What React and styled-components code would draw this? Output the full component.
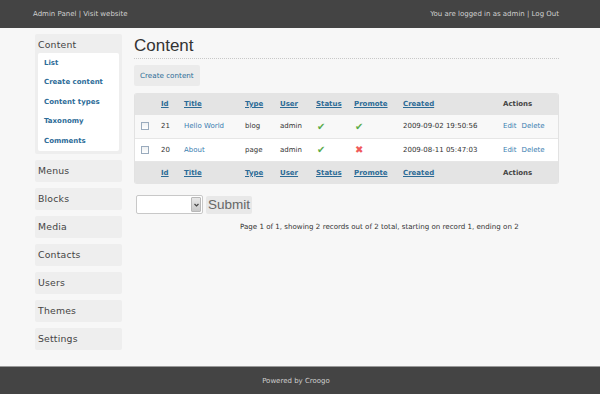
import React from 'react'
import styled, { createGlobalStyle } from 'styled-components'

const GlobalStyle = createGlobalStyle`
    html, body {
        margin: 0;
        padding: 0;
        background: #f7f7f7;
        font-family: "DejaVu Sans", Verdana, sans-serif;
    }
`

const Page = styled.div`
    display: flex;
    flex-direction: column;
    height: 394px;
`

const Header = styled.div`
    height: 28px;
    background: #444444;
    color: #d0d0d0;
    font-size: 7px;
`

const Wrap = styled.div`
    margin-left: 33px;
    width: 526px;
`

const HeaderInner = styled(Wrap)`
    height: 100%;
    display: flex;
    align-items: center;
    justify-content: space-between;
`

const Body = styled(Wrap)`
    flex: 1;
    display: flex;
    gap: 12px;
    padding-top: 6px;
`

const Sidebar = styled.div`
    width: 87px;
    flex-shrink: 0;
    margin-left: 2px;
    display: flex;
    flex-direction: column;
    gap: 6px;
`

const Block = styled.div`
    background: #eeeeee;
    border-radius: 2px;
    padding: 0 3px 3px;
    margin-bottom: ${props => props.extra || "0"};
`

const BlockTitle = styled.div`
    height: 19px;
    line-height: 21px;
    font-size: 9.3px;
    color: #444;
    letter-spacing: 0.2px;
`

const SubList = styled.ul`
    margin: 0;
    padding: 1px 0 0 6px;
    list-style: none;
    background: #fff;
    border-radius: 2px;
`

const SubItem = styled.li`
    line-height: 19.4px;
    font-size: 7px;
    font-weight: bold;
    color: #2d6c98;
`

const Main = styled.div`
    flex: 1;
    min-width: 0;
`

const Title = styled.h1`
    margin: 0;
    font-family: "Liberation Sans", Arial, sans-serif;
    font-weight: normal;
    font-size: 17px;
    line-height: 22px;
    color: #333;
    padding-top: 1px;
    padding-bottom: 1px;
    border-bottom: 1px dotted #c8c8c8;
`

const ActionBar = styled.div`
    padding-top: 6px;
    display: flex;
`

const ActionButton = styled.div`
    background: #ebebeb;
    border-radius: 2px;
    height: 21px;
    line-height: 21px;
    padding: 0 6px;
    font-size: 7.2px;
    color: #2c6b96;
`

const TableWrap = styled.div`
    margin-top: 7px;
    border-radius: 3px;
    overflow: hidden;
    border: 1px solid #e2e2e2;
    border-top: 0;
    border-bottom: 0;
`

const Table = styled.table`
    width: 100%;
    border-collapse: collapse;
    table-layout: fixed;
    font-size: 7px;
    color: #333;
`

const HeadRow = styled.tr`
    background: #e4e4e4;
    height: ${props => props.h || "22px"};
`

const Row = styled.tr`
    background: ${props => props.bg || "#fff"};
    height: 23px;
    border-bottom: 1px solid #e6e6e6;
`

const Th = styled.th`
    text-align: left;
    padding: 0 0 0 6px;
    font-weight: bold;
    color: ${props => props.plain ? "#444" : "#2c6b96"};
    text-decoration: ${props => props.plain ? "none" : "underline"};
`

const Td = styled.td`
    padding: 0 0 0 6px;
    color: ${props => props.link ? "#3a7eb0" : "#333"};
`

const Box = styled.span`
    display: inline-block;
    width: 6px;
    height: 6px;
    border: 1px solid #9aabbd;
    background: linear-gradient(#eef0f2, #fff);
    vertical-align: middle;
`

const Mark = styled.span`
    font-size: 10px;
    color: ${props => props.bad ? "#f05a5a" : "#5aac4a"};
    margin-left: 1px;
`

const Act = styled.span`
    color: #3a7eb0;
    margin-right: 5px;
`

const FormRow = styled.div`
    display: flex;
    align-items: center;
    gap: 3px;
    margin-top: 11px;
    margin-left: 2px;
`

const Select = styled.div`
    width: 64px;
    height: 17px;
    background: #fff;
    border: 1px solid #c8c8c8;
    border-radius: 2px;
    display: flex;
    justify-content: flex-end;
    align-items: center;
    padding-right: 1px;
`

const Arrow = styled.div`
    width: 10px;
    height: 15px;
    background: linear-gradient(#e8e8e8, #c8c8c8);
    border: 1px solid #b8b8b8;
    box-sizing: border-box;
    border-radius: 1px;
    display: flex;
    align-items: center;
    justify-content: center;
`

const Submit = styled.div`
    height: 18px;
    line-height: 18px;
    padding: 0 2px;
    background: #e8e8e8;
    border-radius: 2px;
    font-family: "Liberation Sans", Arial, sans-serif;
    font-size: 13.5px;
    color: #666;
`

const Paging = styled.p`
    margin: 8px 0 0 106px;
    font-size: 7.1px;
    color: #333;
`

const Footer = styled.div`
    height: 27px;
    border-top: 1px solid #9a9a9a;
    background: #444444;
    color: #cfcfcf;
    font-size: 7px;
`

const FooterInner = styled(Wrap)`
    height: 100%;
    display: flex;
    align-items: center;
    justify-content: center;
`

const rows = [
    { id: 21, title: 'Hello World', type: 'blog', user: 'admin', status: true, promote: true, created: '2009-09-02 19:50:56', bg: '#f8f8f8' },
    { id: 20, title: 'About', type: 'page', user: 'admin', status: true, promote: false, created: '2009-08-11 05:47:03', bg: '#ffffff' },
]

const menus = ['Menus', 'Blocks', 'Media', 'Contacts', 'Users', 'Themes', 'Settings']

function HeadCells() {
    return (
        <>
            <th />
            <Th>Id</Th>
            <Th>Title</Th>
            <Th>Type</Th>
            <Th>User</Th>
            <Th>Status</Th>
            <Th>Promote</Th>
            <Th>Created</Th>
            <Th plain>Actions</Th>
        </>
    )
}

export default function App() {
    return (
        <Page>
            <GlobalStyle />
            <Header>
                <HeaderInner>
                    <span>Admin Panel | Visit website</span>
                    <span>You are logged in as admin | Log Out</span>
                </HeaderInner>
            </Header>
            <Body>
                <Sidebar>
                    <Block>
                        <BlockTitle>Content</BlockTitle>
                        <SubList>
                            <SubItem>List</SubItem>
                            <SubItem>Create content</SubItem>
                            <SubItem>Content types</SubItem>
                            <SubItem>Taxonomy</SubItem>
                            <SubItem>Comments</SubItem>
                        </SubList>
                    </Block>
                    {menus.map(m => (
                        <Block key={m}>
                            <BlockTitle>{m}</BlockTitle>
                        </Block>
                    ))}
                </Sidebar>
                <Main>
                    <Title>Content</Title>
                    <ActionBar>
                        <ActionButton>Create content</ActionButton>
                    </ActionBar>
                    <TableWrap>
                        <Table>
                            <colgroup>
                                <col style={{ width: 20 }} />
                                <col style={{ width: 23 }} />
                                <col style={{ width: 61 }} />
                                <col style={{ width: 35 }} />
                                <col style={{ width: 36 }} />
                                <col style={{ width: 38 }} />
                                <col style={{ width: 49 }} />
                                <col style={{ width: 100 }} />
                                <col style={{ width: 63 }} />
                            </colgroup>
                            <tbody>
                                <HeadRow><HeadCells /></HeadRow>
                                {rows.map(r => (
                                    <Row key={r.id} bg={r.bg}>
                                        <Td><Box /></Td>
                                        <Td>{r.id}</Td>
                                        <Td link>{r.title}</Td>
                                        <Td>{r.type}</Td>
                                        <Td>{r.user}</Td>
                                        <Td><Mark>✔</Mark></Td>
                                        <Td>{r.promote ? <Mark>✔</Mark> : <Mark bad>✖</Mark>}</Td>
                                        <Td>{r.created}</Td>
                                        <Td><Act>Edit</Act><Act>Delete</Act></Td>
                                    </Row>
                                ))}
                                <HeadRow h="23px"><HeadCells /></HeadRow>
                            </tbody>
                        </Table>
                    </TableWrap>
                    <FormRow>
                        <Select>
                            <Arrow>
                                <svg width="5" height="4" viewBox="0 0 5 4">
                                    <path d="M0.5 1 L2.5 3 L4.5 1" stroke="#444" strokeWidth="1.2" fill="none" />
                                </svg>
                            </Arrow>
                        </Select>
                        <Submit>Submit</Submit>
                    </FormRow>
                    <Paging>Page 1 of 1, showing 2 records out of 2 total, starting on record 1, ending on 2</Paging>
                </Main>
            </Body>
            <Footer>
                <FooterInner>Powered by Croogo</FooterInner>
            </Footer>
        </Page>
    )
}
